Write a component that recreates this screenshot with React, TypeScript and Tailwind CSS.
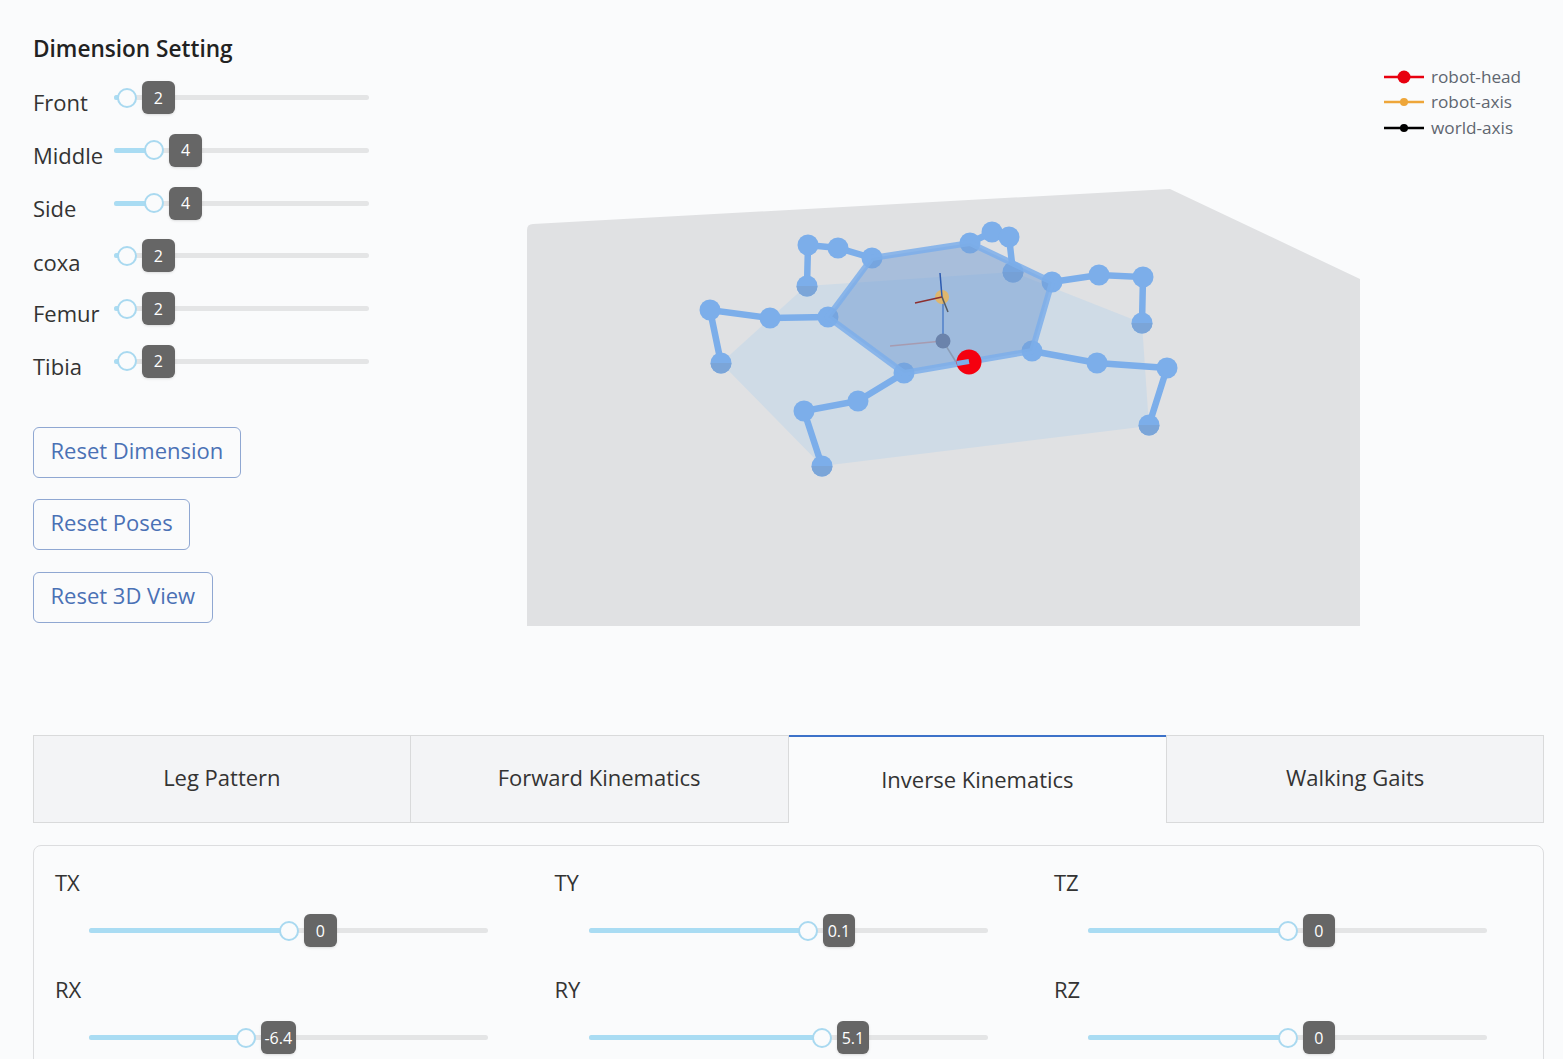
import React from 'react';

type SliderProps = { pos: number; value: string; badgeW?: number };

// pos is the handle centre as a percentage of the track
const Slider = ({ pos, value, badgeW = 33 }: SliderProps) => {
  return (
    <div className="relative h-[33px] w-full">
      <div className="absolute left-0 right-0 top-[14px] h-[5px] rounded-full bg-[#e4e5e6]" />
      <div className="absolute left-0 top-[14px] h-[5px] rounded-full bg-[#a9dcf3]" style={{ width: `${pos}%` }} />
      <div
        className="absolute top-[16.5px] flex items-center"
        style={{ left: `${pos}%` }}
      >
        <div className="absolute left-[-10px] top-[-10px] h-[20px] w-[20px] rounded-full border-2 border-[#a9d9f0] bg-[#fafbfc]" />
        <div
          className="absolute left-[15px] top-[-16.5px] flex h-[33px] items-center justify-center rounded-md bg-[#666666] text-[16px] text-white shadow-sm"
          style={{ width: badgeW }}
        >
          {value}
        </div>
      </div>
    </div>
  );
};

const dims = [
  { label: 'Front', pos: 5, value: '2', mt: 'mt-[6px]' },
  { label: 'Middle', pos: 15.7, value: '4', mt: 'mt-[6px]' },
  { label: 'Side', pos: 15.7, value: '4', mt: 'mt-[6px]' },
  { label: 'coxa', pos: 5, value: '2', mt: 'mt-[8px]' },
  { label: 'Femur', pos: 5, value: '2', mt: 'mt-[6px]' },
  { label: 'Tibia', pos: 5, value: '2', mt: 'mt-[6px]' },
];

const poses = [
  { label: 'TX', pos: 50.1, value: '0', badgeW: 33 },
  { label: 'TY', pos: 55, value: '0.1', badgeW: 32 },
  { label: 'TZ', pos: 50.1, value: '0', badgeW: 32 },
  { label: 'RX', pos: 39.3, value: '-6.4', badgeW: 35 },
  { label: 'RY', pos: 58.5, value: '5.1', badgeW: 32 },
  { label: 'RZ', pos: 50.1, value: '0', badgeW: 32 },
];

const tabs = ['Leg Pattern', 'Forward Kinematics', 'Inverse Kinematics', 'Walking Gaits'];

const legs = [
  [[872, 258], [838, 248], [808, 245], [807, 286]],
  [[970, 243], [992, 232], [1009, 237], [1013, 272]],
  [[1052, 282], [1099, 275], [1143, 277], [1142, 323]],
  [[1032, 351], [1097, 363], [1167, 368], [1149, 425]],
  [[904, 373], [858, 401], [804, 411], [822, 466]],
  [[828, 317], [770, 318], [710, 310], [721, 363]],
];

const BLUE = '#7caeea';

const Robot = () => {
  return (
    <svg width="833" height="437" viewBox="527 189 833 437">
      <path d="M527 230 Q527 224 533 224 L1170 189 L1360 279 L1360 626 L527 626 Z" fill="#e0e1e3" />
      <polygon points="721,363 806,286 1013,272 1142,323 1149,426 822,466" fill="#cfdbe6" />
      {legs.map((leg, i) => (
        <g key={i}>
          <polyline
            points={leg.map((p) => p.join(',')).join(' ')}
            fill="none"
            stroke={BLUE}
            strokeWidth="6.5"
          />
          {leg.slice(0, 3).map((p, j) => (
            <circle key={j} cx={p[0]} cy={p[1]} r="10.5" fill={BLUE} />
          ))}
          <circle cx={leg[3][0]} cy={leg[3][1]} r="10.5" fill={BLUE} />
          <path
            d={`M${leg[3][0] - 10.5} ${leg[3][1]} A10.5 10.5 0 0 0 ${leg[3][0] + 10.5} ${leg[3][1]} Z`}
            fill="#7ba5d8"
          />
        </g>
      ))}
      <polygon
        points="872,258 970,243 1052,282 1032,351 904,373 828,317"
        fill="#6f9bd4"
        fillOpacity="0.5"
        stroke={BLUE}
        strokeOpacity="0.85"
        strokeWidth="6"
        strokeLinejoin="round"
      />
      {/* world axis */}
      <line x1="890" y1="346" x2="943" y2="341" stroke="#a79bb0" strokeWidth="1.5" />
      <line x1="943" y1="341" x2="956" y2="362" stroke="#8a9cb5" strokeWidth="1.5" />
      <line x1="943" y1="297" x2="943" y2="341" stroke="#4f7fc9" strokeWidth="1.5" />
      <circle cx="943" cy="341" r="7.5" fill="#6b83ab" />
      {/* robot axis */}
      <circle cx="942" cy="297" r="7" fill="#eab65a" fillOpacity="0.85" />
      <line x1="940" y1="273" x2="942" y2="297" stroke="#2d5bb0" strokeWidth="1.5" />
      <line x1="915" y1="303" x2="942" y2="297" stroke="#8c2f2f" strokeWidth="1.5" />
      <line x1="942" y1="297" x2="948" y2="312" stroke="#555c66" strokeWidth="1.5" />
      {/* head */}
      <circle cx="969" cy="362" r="12.5" fill="#f5000f" />
      <line x1="957" y1="363.5" x2="969" y2="361.5" stroke={BLUE} strokeWidth="5" />
    </svg>
  );
};

const legendItems = [
  { label: 'robot-head', color: '#e8000f', r: 6.5 },
  { label: 'robot-axis', color: '#eea63a', r: 4 },
  { label: 'world-axis', color: '#000000', r: 4 },
];

const Legend = () => {
  return (
    <div className="absolute left-[1384px] top-[64px] flex flex-col font-['Open_Sans',sans-serif] text-[17.2px] text-[#5f6670]">
      {legendItems.map((item) => (
        <div key={item.label} className="flex h-[25.5px] items-center gap-[7px]">
          <svg width="40" height="14" viewBox="0 0 40 14">
            <line x1="0" y1="7" x2="40" y2="7" stroke={item.color} strokeWidth="2.5" />
            <circle cx="20" cy="7" r={item.r} fill={item.color} />
          </svg>
          <span>{item.label}</span>
        </div>
      ))}
    </div>
  );
};

const App = () => {
  return (
    <div className="relative h-[1059px] overflow-hidden bg-[#fafbfc] font-['Open_Sans',sans-serif] text-[#333333]">
      <Legend />
      <div className="flex h-[735px] pl-[33px]">
        <div className="w-[336px] pt-[34px]">
          <h2 className="text-[22.6px] font-semibold leading-[30px] text-[#222222]">Dimension Setting</h2>
          <div className="mt-[17px] flex flex-col">
            {dims.map((d) => (
              <div key={d.label} className="flex h-[52.8px] items-start">
                <div className={`w-[81px] text-[22px] leading-[30px] ${d.mt}`}>{d.label}</div>
                <div className="flex-1">
                  <Slider pos={d.pos} value={d.value} />
                </div>
              </div>
            ))}
          </div>
          <div className="mt-[29px] flex flex-col items-start gap-[21.5px]">
            <button className="h-[51px] rounded-md border border-[#8fa7d2] px-[16.5px] pb-[4px] text-[22px] text-[#4a71b5]">Reset Dimension</button>
            <button className="h-[51px] rounded-md border border-[#8fa7d2] px-[16.5px] pb-[4px] text-[22px] text-[#4a71b5]">Reset Poses</button>
            <button className="h-[51px] rounded-md border border-[#8fa7d2] px-[16.5px] pb-[4px] text-[22px] text-[#4a71b5]">Reset 3D View</button>
          </div>
        </div>
        <div className="ml-[158px] pt-[189px]">
          <Robot />
        </div>
      </div>
      <div className="ml-[33px] w-[1511px]">
        <div className="grid h-[88px] grid-cols-4">
          {tabs.map((t, i) =>
            i === 2 ? (
              <div key={t} className="flex items-center justify-center border-t-2 border-[#3d72c9] pb-[2px] text-[22px] text-[#333333]">
                {t}
              </div>
            ) : (
              <div
                key={t}
                className={`flex items-center justify-center border-y border-r border-[#d9dadb] bg-[#f3f4f6] pb-[4px] text-[22px] text-[#333333] ${i !== 1 ? 'border-l' : ''}`}
              >
                {t}
              </div>
            ),
          )}
        </div>
        <div className="mt-[22px] rounded-t-lg border border-[#dcdddf] px-[21px] pt-[21px] pb-[40px]">
          <div className="grid grid-cols-[repeat(3,433px)] gap-x-[66.5px]">
            {poses.map((p) => (
              <div key={p.label} className="h-[107px]">
                <div className="text-[22px] leading-[30px]">{p.label}</div>
                <div className="ml-[34px] mt-[17px]">
                  <Slider pos={p.pos} value={p.value} badgeW={p.badgeW} />
                </div>
              </div>
            ))}
          </div>
        </div>
      </div>
    </div>
  );
};

export default App;
